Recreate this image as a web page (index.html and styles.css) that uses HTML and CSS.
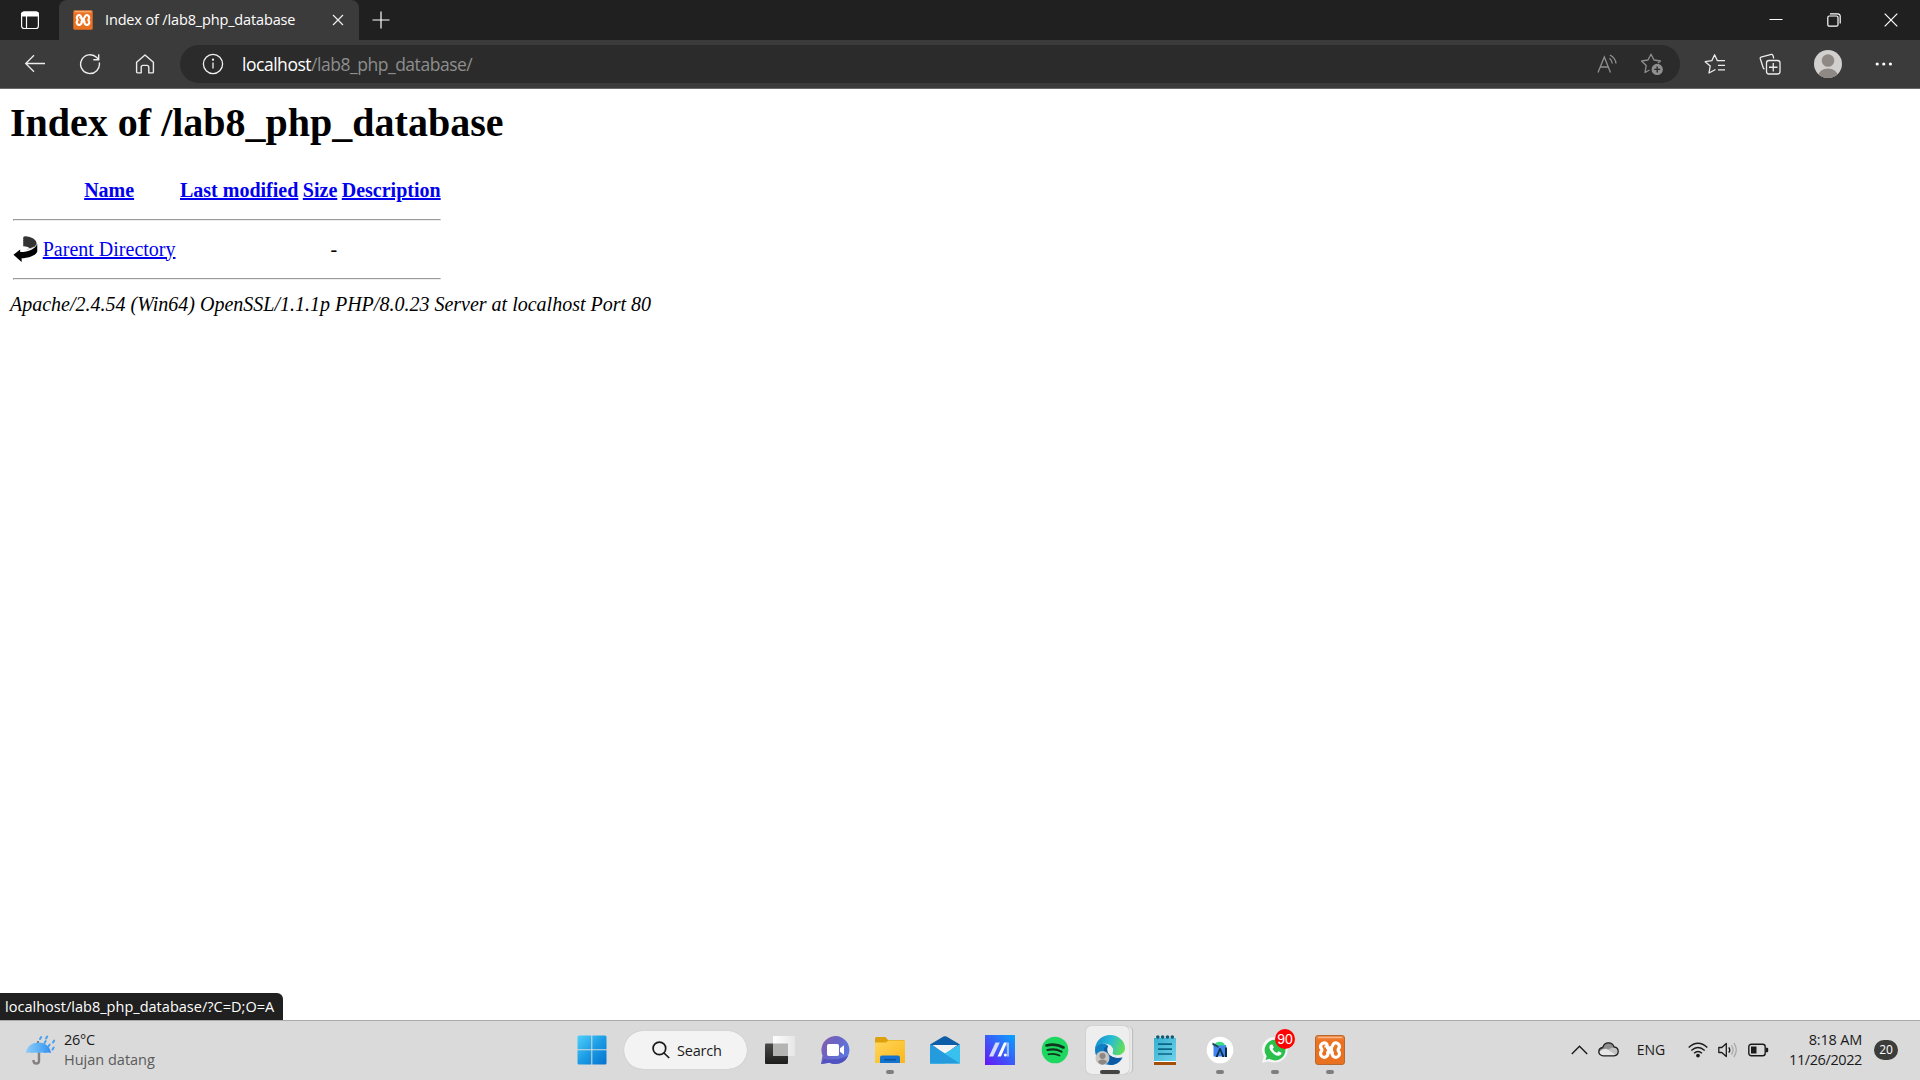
FILE: index.html
```html
<!DOCTYPE html>
<html lang="en">
<head>
<meta charset="utf-8">
<title>Index of /lab8_php_database</title>
<link rel="stylesheet" href="styles.css">
</head>
<body>
<svg width="0" height="0" class="defs" aria-hidden="true">
  <defs>
    <linearGradient id="gXampp" x1="0" y1="0" x2="0" y2="1"><stop offset="0" stop-color="#ef8a45"/><stop offset=".2" stop-color="#ed7020"/><stop offset="1" stop-color="#e8711f"/></linearGradient>
    <symbol id="xampp" viewBox="0 0 30 30">
      <rect x=".5" y=".5" width="29" height="29" rx="2.5" fill="url(#gXampp)" stroke="#b9672c"/>
      <path d="M3 2.5h24" stroke="#f9b384" stroke-width="1.4"/>
      <path d="M11 12.500V10.500M11 12.500C13 12.500 12.500 9 10.500 8A3.700 3.700 0 0 0 6.800 14.200V15.800A3.700 3.700 0 1 0 12.800 19.500V17.200H17.200V19.500A3.700 3.700 0 1 0 23.200 15.800V14.200A3.700 3.700 0 0 0 19.500 8C17.500 9 17.500 12.800 15.500 12.800H11.500" fill="none" stroke="#fff" stroke-width="3.200" stroke-linejoin="round"/>
      <path d="M12 13h6v4h-6z" fill="#fff"/>
    </symbol>
  </defs>
</svg>

<header class="titlebar">
  <button class="tab-actions" aria-label="Tab actions">
    <svg width="20" height="20" viewBox="0 0 20 20" fill="none" stroke="#fff" stroke-width="1.200"><rect x="1.600" y="2" width="16.800" height="16.500" rx="2.500"/><path d="M6.500 6v12.500"/><path d="M1.600 6V4.500A2.500 2.500 0 0 1 4.100 2h11.800a2.500 2.500 0 0 1 2.500 2.500V6z" fill="#fff"/></svg>
  </button>
  <div class="tab">
    <svg class="favicon" width="20" height="20"><use href="#xampp"/></svg>
    <span class="tab-title">Index of /lab8_php_database</span>
    <svg class="tab-close" width="12" height="12" viewBox="0 0 12 12" stroke="#eee" stroke-width="1.200"><path d="M1 1l10 10M11 1L1 11"/></svg>
  </div>
  <svg class="new-tab" width="18" height="18" viewBox="0 0 18 18" stroke="#fff" stroke-width="1.200"><path d="M9 .5v17M.5 9h17"/></svg>
  <div class="window-controls">
    <svg width="14" height="14" viewBox="0 0 14 14" stroke="#fff"><path d="M.5 6.500h13"/></svg>
    <svg width="14" height="14" viewBox="0 0 14 14" fill="none" stroke="#fff" stroke-width="1.200"><rect x=".8" y="3" width="10.200" height="10.200" rx="1.500"/><path d="M3 .8h7.700a2.500 2.500 0 0 1 2.500 2.500v7.200"/></svg>
    <svg width="14" height="14" viewBox="0 0 14 14" stroke="#fff" stroke-width="1.200"><path d="M.7.7l12.600 12.600M13.300.7L.7 13.300"/></svg>
  </div>
</header>

<nav class="toolbar">
  <svg class="nav-icon" width="22" height="20" viewBox="0 0 22 20" fill="none" stroke="#ececec" stroke-width="1.300"><path d="M10 1.200L1.700 9.500l8.300 8.300M1.700 9.500H21"/></svg>
  <svg class="nav-icon" width="22" height="22" viewBox="0 0 22 22" fill="none" stroke="#ececec" stroke-width="1.400"><path d="M20.300 9.500A9.400 9.400 0 1 1 17.800 4.600l1.700 1.900M19.700 1.200v5.600h-5.400"/></svg>
  <svg class="nav-icon" width="22" height="22" viewBox="0 0 22 22" fill="none" stroke="#ececec" stroke-width="1.400" stroke-linejoin="round"><path d="M2.600 9.300L11 2l8.400 7.300v9.600a1 1 0 0 1-1 1h-3.600v-5.700a1.800 1.800 0 0 0-1.800-1.800h-4a1.800 1.800 0 0 0-1.800 1.800v5.700H3.600a1 1 0 0 1-1-1z"/></svg>
  <div class="address">
    <svg width="22" height="22" viewBox="0 0 22 22" fill="none" stroke="#f2f2f2" stroke-width="1.300"><circle cx="11" cy="11" r="9.600"/><path d="M11 9.400v6.100"/><circle cx="11" cy="6.700" r=".5" fill="#fff"/></svg>
    <span class="url"><span class="host">localhost</span>/lab8_php_database/</span>
    <svg class="read-aloud" width="22" height="20" viewBox="0 0 22 20" fill="none" stroke="#8f8f8f" stroke-width="1.300"><path d="M1 18.500L7.300 3l6.200 15.500M3.200 13h8.200M12.500 4.200q2.500 2 2.800 5.300M12.800 1q5.500 2.500 6.200 8.500"/></svg>
    <svg class="add-favorite" width="24" height="24" viewBox="0 0 24 24" fill="none" stroke="#8f8f8f" stroke-width="1.300" stroke-linejoin="round"><path d="M9.500 18L5 20.500l1.200-7L1.500 9l6.500-1L11 2.200 14 8l6.500 1-2.500 2"/><circle cx="17.200" cy="17.400" r="5" fill="#8f8f8f"/><path d="M17.200 14.400v6M14.200 17.400h6" stroke="#2b2b2b" stroke-width="1.400"/></svg>
  </div>
  <div class="tools">
    <svg width="22" height="22" viewBox="0 0 22 22" fill="none" stroke="#ececec" stroke-width="1.300" stroke-linejoin="round"><path d="M11.500 16.500L5 20l1.200-7L1.200 8.700l6.600-1L10.600 1.800l2.800 5.900H21M14 12.300h7M14 16.800h7"/></svg>
    <svg width="22" height="22" viewBox="0 0 22 22" fill="none" stroke="#ececec" stroke-width="1.300" stroke-linejoin="round"><path d="M14.500 5.500V4l-.8-2q-.4-.8-1.400-.6L2 4.200q-1 .3-.8 1.300L4.300 15q.3.900 1.300.9"/><rect x="7.500" y="7.500" width="13.500" height="13.500" rx="2.500"/><path d="M14.250 10v8.500M10 14.250h8.500"/></svg>
    <svg class="avatar" width="28" height="28" viewBox="0 0 28 28"><defs><clipPath id="disc"><circle cx="14" cy="14" r="14"/></clipPath></defs><g clip-path="url(#disc)"><rect width="28" height="28" fill="#d2d0ce"/><circle cx="14" cy="10.500" r="6.300" fill="#8f8985"/><ellipse cx="14" cy="25.500" rx="9.500" ry="7" fill="#8f8985"/></g></svg>
    <svg width="18" height="6" viewBox="0 0 18 6" fill="#fff"><circle cx="2.200" cy="3" r="1.600"/><circle cx="8.800" cy="3" r="1.600"/><circle cx="15.400" cy="3" r="1.600"/></svg>
  </div>
</nav>

<main class="page">
  <h1>Index of /lab8_php_database</h1>
  <table class="listing">
    <tr class="head"><th><div class="blank"></div></th><th><a href="#">Name</a></th><th><a href="#">Last modified</a></th><th><a href="#">Size</a></th><th><a href="#">Description</a></th></tr>
    <tr class="rule"><th colspan="5"><hr></th></tr>
    <tr class="entry">
      <td><svg class="back" width="25" height="27" viewBox="0 0 25 28"><path d="M10 1l2-.7c7 .5 12 3.500 12 7.500q0 2-1.500 3L17 13q-1-2-7-2.500z" fill="#333"/><path d="M10.500 1v10" stroke="#888" stroke-dasharray="1 1"/><path d="M24.700 8v8c-1 4-8 6.500-16.200 7.200V27L0 19.500 7 14v2.700c9 0 16-3.500 17.700-8.700z" fill="#000"/><path d="M14 13.800q6-.8 9.500-4.300" fill="none" stroke="#bbb" stroke-dasharray="2 1"/></svg></td>
      <td><a href="#">Parent Directory</a></td><td></td><td class="size">-</td><td></td>
    </tr>
    <tr class="rule"><th colspan="5"><hr></th></tr>
  </table>
  <address>Apache/2.4.54 (Win64) OpenSSL/1.1.1p PHP/8.0.23 Server at localhost Port 80</address>
  <div class="status"><span>localhost/lab8_php_database/?C=D;O=A</span></div>
</main>

<footer class="taskbar">
  <div class="weather">
    <svg width="30" height="32" viewBox="0 0 30 32"><defs><linearGradient id="gUmb"><stop offset="0" stop-color="#8fcaf8"/><stop offset=".5" stop-color="#5fb2f5"/><stop offset="1" stop-color="#2f8ef0"/></linearGradient></defs><path d="M13 17v10q0 2.500-2.700 2.500T7.500 27v-1" fill="none" stroke="#857f80" stroke-width="2.400"/><path d="M12 7v3" stroke="#555" stroke-width="1.500"/><path d="M0 19C1 12 6 8.500 12.500 8.500S24 12 25 19q-3-1-5.500 0-3.500-1-7 0-3.500-1-7 0-2.500-1-5.500 0z" fill="url(#gUmb)"/><path d="M14 5l1.200-2M20 4.500l1.200-2M18.500 9l1.200-2M27 8.500l1.200-2M22.500 12.500l1.200-2M26.500 15.500l1.200-2" stroke="#4ba0ef" stroke-width="2" stroke-linecap="round"/></svg>
    <div class="forecast"><span class="temp">26°C</span><span class="sky">Hujan datang</span></div>
  </div>

  <div class="apps">
    <div class="app"><svg width="30" height="30" viewBox="0 0 30 30"><defs><linearGradient id="gWin" x1="0" y1="0" x2="1" y2="1"><stop offset="0" stop-color="#4fd0fb"/><stop offset=".5" stop-color="#1c9ce4"/><stop offset="1" stop-color="#0573d0"/></linearGradient></defs><path d="M2 .5h12.300v13.800H.5V2Q.5.500 2 .5zM15.300.5H28q1.500 0 1.500 1.500v12.300H15.300zM.5 15.300h13.800v14.200H2Q.5 29.500.5 28zM15.300 15.300h14.200V28q0 1.500-1.500 1.500H15.300z" fill="url(#gWin)"/></svg></div>
    <div class="search"><svg width="18" height="18" viewBox="0 0 18 18" fill="none" stroke="#1b1b1b" stroke-width="1.700"><circle cx="7.400" cy="7.400" r="6.300"/><path d="M12 12l5.200 5"/></svg><span>Search</span></div>
    <div class="app"><svg width="30" height="30" viewBox="0 0 30 30"><defs><linearGradient id="gTask" x1="0" y1="0" x2="0" y2="1"><stop offset="0" stop-color="#4a4a48"/><stop offset="1" stop-color="#1d1d1b"/></linearGradient><linearGradient id="gPane"><stop offset="0" stop-color="#fff"/><stop offset="1" stop-color="#e6e6e6"/></linearGradient></defs><rect x="0" y="8.500" width="23" height="20.500" rx="1" fill="url(#gTask)"/><rect x="8" y="1" width="22" height="20" rx="1" fill="url(#gPane)"/><path d="M8 8.500h15V21H8z" fill="#b4b4b2"/></svg></div>
    <div class="app"><svg width="30" height="30" viewBox="0 0 30 30"><defs><linearGradient id="gChat" x1="0" y1="0" x2="1" y2=".6"><stop offset="0" stop-color="#8a5fa8"/><stop offset=".45" stop-color="#6c63c4"/><stop offset="1" stop-color="#5c78e0"/></linearGradient></defs><path d="M15.500 1A14 14 0 1 1 9.500 27.700L1 29l1.500-8.500A14 14 0 0 1 15.500 1z" fill="url(#gChat)"/><path d="M4 24q12 2 24-3-4 8-12.500 8-3.500 0-6-1.300L1 29z" fill="#5052c0"/><rect x="7" y="9" width="12" height="12" rx="1.800" fill="#fff"/><path d="M20 13.200l4-3v9.600l-4-3z" fill="#fff"/></svg></div>
    <div class="app run"><svg width="30" height="30" viewBox="0 0 30 30"><defs><linearGradient id="gFold" x1="0" y1="0" x2="1" y2="1"><stop offset="0" stop-color="#ffd75b"/><stop offset="1" stop-color="#fbb61c"/></linearGradient></defs><path d="M0 3.500Q0 2 1.500 2h9l2.500 3h15.500Q30 5 30 6.500V12H0z" fill="#dca10c"/><path d="M0 7.500h11L13.500 5.500H30V28H0z" fill="url(#gFold)"/><path d="M5 28v-5.500Q5 20.500 7 20.500h16q2 0 2 2V28z" fill="#1274d0"/><path d="M9 24.800h12" stroke="#0b4b91" stroke-width="1.200"/></svg></div>
    <div class="app"><svg width="30" height="30" viewBox="0 0 30 30"><path d="M0 9.500L13.500 1.600q1.500-.9 3 0L30 9.500l-15 9z" fill="#0e5ea7"/><path d="M2.500 10h25L15 19z" fill="#f4f4f4"/><path d="M0 9.500L15 18.500V28.500H0z" fill="#279fdf"/><path d="M30 9.500L13 19.500 0 28.500h30z" fill="#38c1ef"/><path d="M0 9.500L30 28.500H0z" fill="#239bdd"/></svg></div>
    <div class="app"><svg width="30" height="30" viewBox="0 0 30 30"><defs><linearGradient id="gArm" x1="1" y1="0" x2="0" y2="1"><stop offset="0" stop-color="#05a5ff"/><stop offset=".5" stop-color="#3a5cf9"/><stop offset="1" stop-color="#6714f5"/></linearGradient></defs><path d="M0 0h30v30H0z" fill="url(#gArm)"/><path d="M4 21.500L10.500 7.500h4.300L8.200 21.500z" fill="#d3dcff"/><path d="M12.500 21.500L19 7.500h3L16 21.500z" fill="#fff"/><path d="M20.800 7.500H24v14h-2.200v-9z" fill="#9dbcff"/><circle cx="20.300" cy="20" r="1.500" fill="#fff"/></svg></div>
    <div class="app"><svg width="30" height="30" viewBox="0 0 30 30"><circle cx="15" cy="15" r="13.300" fill="#1ed760"/><g fill="none" stroke="#10351d" stroke-linecap="round"><path d="M6.500 10.500q9-2.500 17 2" stroke-width="2.600"/><path d="M7.500 15q7.500-2 14 1.600" stroke-width="2.200"/><path d="M8.500 19.300q6-1.500 11 1.300" stroke-width="1.700"/></g></svg></div>
    <div class="app active"><svg width="32" height="32" viewBox="0 0 32 32"><defs><linearGradient id="gEdge" x1="0" y1=".2" x2="1" y2=".5"><stop offset="0" stop-color="#168ad2"/><stop offset=".5" stop-color="#28bcd5"/><stop offset="1" stop-color="#62df58"/></linearGradient></defs><path d="M1 14C2.500 6 8.500 1 16 1c8.500 0 15 6 15 13 0 5-4 7.500-8 7.500-4.500 0-6-2-5-3.500 1.500-3 .5-7-5-8C7 9 2.500 11 1 16z" fill="url(#gEdge)"/><path d="M1 16c0-4 5-7 10-6 2 .4 3 1.300 3 2.500-3 3.500-2.500 9 1.500 12 4 3 9 2.500 13-.5-3 5-7.500 7.500-13 7C7.500 30.500 1 24 1 16z" fill="#107fc4"/><path d="M10 16c0-2 2-4 4-4-2 4 0 9.500 5 10.800 4 1 7.500-.3 10.500-1.500C27 27 22 31 16.500 31 12 28.500 10 23 10 16z" fill="#0c59a4"/><path d="M16 12.500c3 .5 4 3.500 2.600 6.200-.4 1.400 1.600 2.600 4.600 2.600q4 0 7-3l1 3.500q-3 2.200-7 2.200c-6 0-9.700-4-9.700-8 0-1.500.5-3 1.500-3.500z" fill="#eee"/><circle cx="8.500" cy="24" r="7" fill="#c8c5c3"/><circle cx="8.500" cy="22" r="3" fill="#8d8783"/><path d="M4 28q1-2.500 4.500-2.500T13 28q-2 2.700-4.500 2.700T4 28z" fill="#8d8783"/></svg></div>
    <div class="app"><svg width="24" height="30" viewBox="0 0 24 30"><defs><linearGradient id="gNote" x1="0" y1="0" x2="1" y2="1"><stop offset="0" stop-color="#36b0cf"/><stop offset="1" stop-color="#70d2ea"/></linearGradient></defs><path d="M1 24h22v6H1z" fill="#a34f08"/><path d="M1 25.500h22V27H1z" fill="#fff"/><path d="M1 3h22v23H1z" fill="url(#gNote)"/><g fill="#0d5973"><circle cx="4.800" cy="2" r="1.800"/><circle cx="9.600" cy="2" r="1.800"/><circle cx="14.500" cy="2" r="1.800"/><circle cx="19.300" cy="2" r="1.800"/></g><path d="M5 9.200h14M5 14.200h14M5 19h14" stroke="#0b6585" stroke-width="1.700"/></svg></div>
    <div class="app run"><svg width="30" height="30" viewBox="0 0 30 30"><circle cx="15" cy="15" r="13.300" fill="#fff"/><path d="M8.500 10h12.700v11.500H8.500z" fill="#4384ee"/><path d="M9.500 10.500Q10 6.800 14.500 6.800T20 10.500z" fill="#3ddc84"/><path d="M7.500 7.500l6 3.500v2l-6-3z" fill="#20445d"/><path d="M10.500 22l4-9h1l4 9h-2.200L15 15.500 12.700 22zM20 12.500h2V22h-2z" fill="#082f45"/></svg></div>
    <div class="app run"><svg width="30" height="30" viewBox="0 0 30 30"><path d="M15 2A13 12.800 0 1 1 8.700 26.200L2 28l1.800-6.600A13 12.800 0 0 1 15 2z" fill="#f6f6f6"/><path d="M14.800 4.800a10.300 10.300 0 1 1-5.300 18.900L5.500 25l1.200-3.800A10.300 10.300 0 0 1 14.800 4.800z" fill="#2bbf4b"/><path d="M11 9.500c-2 1-2 3.500-.6 5.700 2.200 3.500 5 5.500 8.300 5.500 1.800 0 3-1.500 2.800-2.900l-3-1.500-1.500 1.800c-2-.8-3.500-2.300-4.400-4.100l1.200-1.500L12.500 9.500z" fill="#fff"/></svg><b class="badge">90</b></div>
    <div class="app run"><svg width="30" height="30"><use href="#xampp"/></svg></div>
  </div>

  <div class="tray">
    <svg width="17" height="10" viewBox="0 0 17 10" fill="none" stroke="#1b1b1b" stroke-width="1.400"><path d="M.8 9l7.700-7.700L16.200 9"/></svg>
    <svg class="cloud" width="21" height="15" viewBox="0 0 21 15"><path d="M5 13.800q-4.200-.5-4.200-4.200Q1 6 4.700 5.500 6 .8 10.500.8T16 5q4.200.3 4.200 4.500 0 3.800-4.200 4.300z" fill="#8f8f8f"/><path d="M1 10q5-5 9-2.500l8 5q-1 1.300-3 1.300H5Q2 13.500 1 10z" fill="#e6e6e6"/><path d="M10 7.500L16 5q4.200.3 4.200 4.500 0 2-2 3.400z" fill="#c3c3c3"/><path d="M5 13.800q-4.200-.5-4.200-4.200Q1 6 4.700 5.500 6 .8 10.500.8T16 5q4.200.3 4.200 4.500 0 3.800-4.200 4.300z" fill="none" stroke="#222" stroke-width="1.300"/></svg>
    <span class="lang">ENG</span>
    <svg class="wifi" width="20" height="16" viewBox="0 0 20 16" fill="none" stroke="#1b1b1b" stroke-width="1.400"><path d="M.7 5.600q9.300-8.500 18.600 0M3.300 8.500q6.700-6 13.400 0M6 11.300q4-3.500 8 0"/><circle cx="10" cy="13.600" r="1.200" fill="#1b1b1b"/></svg>
    <svg class="volume" width="20" height="16" viewBox="0 0 20 16" fill="none" stroke="#1b1b1b" stroke-width="1.300"><path d="M.8 5.500h3L8.300 1.400v13.200L3.800 10.500h-3z" stroke-linejoin="round"/><path d="M10.800 5.300q2 2.700 0 5.400"/><path d="M13.300 3.300q3.500 4.700 0 9.400M15.800 1q5 7 0 14" stroke="#aaa"/></svg>
    <svg class="battery" width="21" height="14" viewBox="0 0 21 14"><rect x=".8" y="1.300" width="16.400" height="11.400" rx="2.500" fill="none" stroke="#1b1b1b" stroke-width="1.400"/><path d="M3 3.400h5.500v7.200H3zM18 4.800h1.200q1 0 1 1v2.400q0 1-1 1H18z" fill="#1b1b1b"/></svg>
    <div class="clock"><span class="time">8:18 AM</span><span class="date">11/26/2022</span></div>
    <span class="notices">20</span>
  </div>
</footer>
</body>
</html>
```
FILE: styles.css
```css
* { box-sizing: border-box; }

body {
  margin: 0;
  width: 1920px;
  height: 1080px;
  overflow: hidden;
  display: flex;
  flex-direction: column;
  background: #fff;
  font-family: "Open Sans", "Noto Sans", sans-serif;
}

svg { display: block; flex: none; }
.defs { position: absolute; }
span { white-space: nowrap; }

/* Browser title bar */
.titlebar {
  display: flex;
  align-items: center;
  height: 40px;
  background: #202020;
}
.tab-actions {
  width: 59px;
  height: 40px;
  padding: 0 0 0 20px;
  border: 0;
  background: none;
}
.tab {
  display: flex;
  align-items: center;
  width: 300px;
  height: 40px;
  padding: 0 15px 0 14px;
  border-radius: 8px 8px 0 0;
  background: #3b3b3b;
}
.tab-title {
  margin-left: 12px;
  padding-bottom: 2px;
  color: #fff;
  font-size: 14.5px;
  letter-spacing: -0.15px;
}
.tab-close { margin-left: auto; }
.new-tab { margin-left: 13px; }
.window-controls {
  display: flex;
  gap: 43.5px;
  margin-left: auto;
  padding-right: 22px;
}

/* Navigation toolbar */
.toolbar {
  display: flex;
  align-items: center;
  height: 49px;
  padding: 0 26px 0 24px;
  border-bottom: 1px solid #686868;
  background: #3b3b3b;
}
.nav-icon { margin-right: 33px; }
.address {
  display: flex;
  flex: none;
  align-items: center;
  width: 1500px;
  height: 38px;
  margin-left: -9px;
  padding: 0 16px 0 22px;
  border-radius: 19px;
  background: #2b2b2b;
}
.url {
  margin-left: 18px;
  padding-bottom: 1px;
  color: #8e8e8e;
  font-size: 17.5px;
  letter-spacing: -0.47px;
}
.host { color: #fff; }
.read-aloud { margin-left: auto; }
.add-favorite { margin-left: 21px; }
.tools {
  display: flex;
  align-items: center;
  margin-left: 24px;
  gap: 33px;
}

/* Directory listing */
.page {
  position: relative;
  height: 931px;
  padding: 11px 10px 0;
  font: 20px/23px "Liberation Serif", serif;
  color: #000;
}
.page h1 {
  margin: 0;
  font-size: 40px;
  line-height: 46px;
}
.listing {
  margin-top: 27px;
  border-spacing: 2.5px;
}
.listing th, .listing td { padding: 0 1.25px; }
.listing a { color: #0000ee; }
.head { height: 30px; }
.entry { height: 30px; }
.rule { height: 25px; }
.blank { width: 25px; }
.size { text-align: right; }
hr {
  margin: 0;
  border: 1px solid;
  border-color: #9a9a9a #eee #eee #9a9a9a;
}
.status {
  position: absolute;
  left: 0;
  bottom: 0;
  width: 283px;
  height: 27px;
  padding-left: 5px;
  border-radius: 0 6px 0 0;
  background: #202020;
  color: #fff;
  font: 14.5px/27px "Open Sans", sans-serif;
  letter-spacing: 0.02px;
}

/* Taskbar */
.taskbar {
  display: grid;
  grid-template-columns: 564px 793px 1fr;
  height: 60px;
  border-top: 1px solid #a9a9a9;
  background: #dadada;
  color: #1b1b1b;
  font-size: 14.5px;
}
.weather {
  display: flex;
  align-items: center;
  padding: 0 0 2px 26px;
}
.forecast {
  display: flex;
  flex-direction: column;
  margin-left: 8px;
  line-height: 20px;
  letter-spacing: -0.3px;
}
.sky { color: #5a5a5a; letter-spacing: 0; }
.apps { display: flex; align-items: center; }
.app {
  position: relative;
  display: flex;
  align-items: center;
  justify-content: center;
  width: 55px;
  height: 59px;
  padding-bottom: 1px;
}
.search {
  display: flex;
  align-items: center;
  width: 123px;
  height: 38px;
  margin: 0 5px 1px;
  padding-left: 28px;
  border-radius: 19px;
  background: #f3f3f3;
  box-shadow: 0 0 1px #aaa;
}
.search span { margin-left: 7px; letter-spacing: -0.2px; }
.run::after, .active::after {
  content: "";
  position: absolute;
  left: 24px;
  bottom: 6px;
  width: 8px;
  height: 4px;
  border-radius: 2px;
  background: #7e7e7e;
}
.active::after { left: 18px; width: 20px; background: #454341; }
.active::before {
  content: "";
  position: absolute;
  left: 4px;
  top: 5px;
  width: 43px;
  height: 48px;
  border-radius: 5px;
  background: #eee;
  box-shadow: 0 0 1px #999, 4px 0 0 -1px #e8e8e8, 5px 0 1px -1px #bbb;
}
.active svg { position: relative; }
.badge {
  position: absolute;
  left: 28px;
  top: 8px;
  width: 20px;
  height: 20px;
  border-radius: 50%;
  background: #fe0000;
  color: #fff;
  font: 14px/20px "Liberation Sans", sans-serif;
  text-align: center;
}
.tray {
  display: flex;
  align-items: center;
  justify-content: flex-end;
  padding: 0 22px 2px 0;
}
.cloud { margin-left: 10px; }
.lang { margin-left: 18px; font-size: 14px; letter-spacing: -0.1px; }
.wifi { margin-left: 23px; }
.volume { margin-left: 10px; }
.battery { margin-left: 10px; }
.clock {
  display: flex;
  flex-direction: column;
  align-items: flex-end;
  width: 73px;
  margin-left: 20px;
  line-height: 20px;
  letter-spacing: -0.4px;
}
.time { letter-spacing: -0.2px; }
.notices {
  width: 24px;
  height: 20px;
  margin-left: 12px;
  border-radius: 10px;
  background: #3c3c3a;
  color: #fff;
  font-size: 12px;
  line-height: 20px;
  text-align: center;
}
```
